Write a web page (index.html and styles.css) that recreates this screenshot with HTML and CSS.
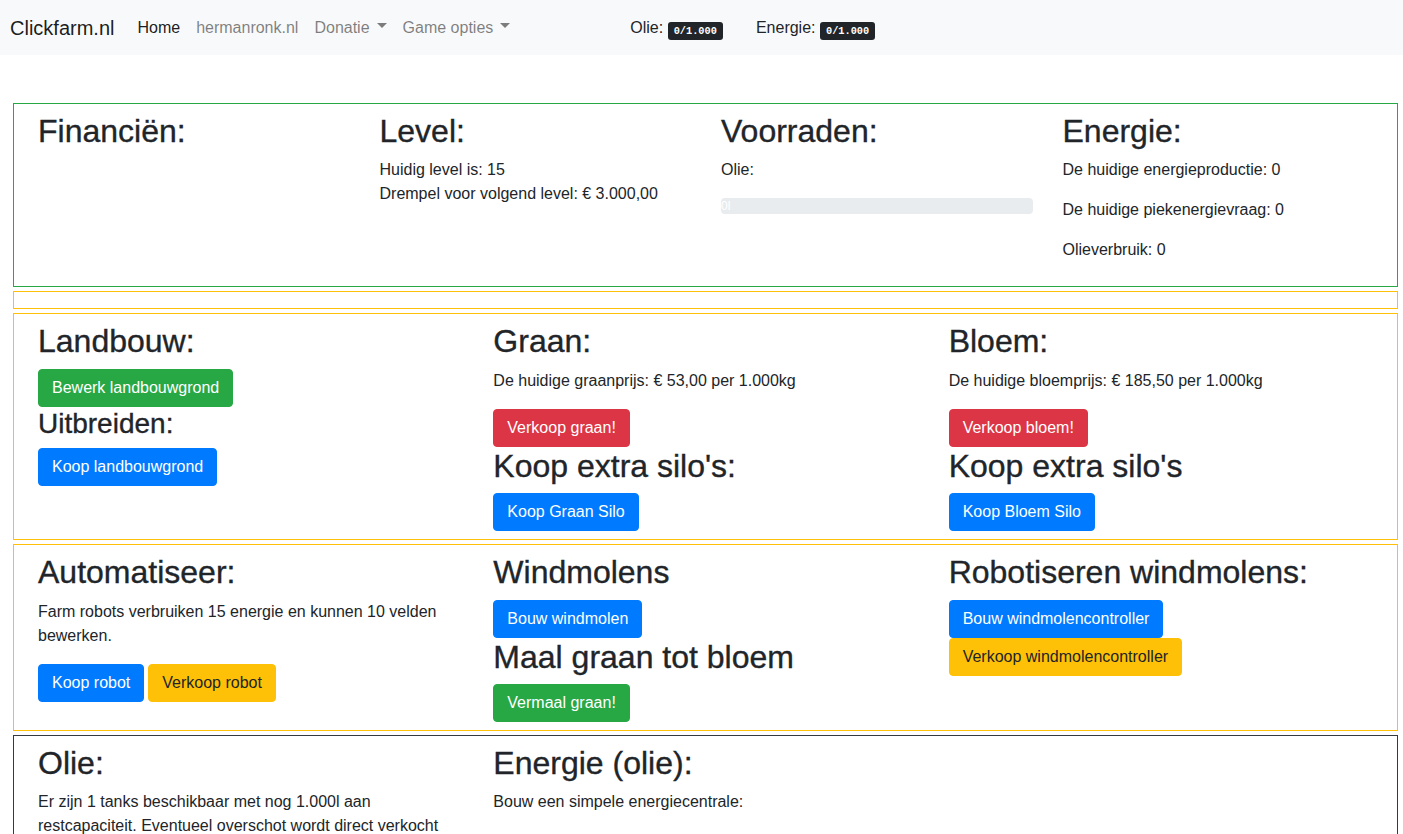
FILE: index.html
```html
<!DOCTYPE html>
<html lang="nl">
<head>
<meta charset="utf-8">
<title>Clickfarm.nl</title>
<link rel="stylesheet" href="styles.css">
</head>
<body>
<nav class="navbar">
  <a class="brand" href="#">Clickfarm.nl</a>
  <ul class="nav">
    <li><a class="nav-link active" href="#">Home</a></li>
    <li><a class="nav-link" href="#">hermanronk.nl</a></li>
    <li><a class="nav-link dropdown" href="#">Donatie</a></li>
    <li><a class="nav-link dropdown" href="#">Game opties</a></li>
  </ul>
  <div class="stats">
    <span class="stat">Olie: <kbd>0/1.000</kbd></span>
    <span class="stat">Energie: <kbd>0/1.000</kbd></span>
  </div>
</nav>

<main class="content">
  <section class="card card-success">
    <div class="row row-4">
      <div class="col">
        <h2>Financiën:</h2>
      </div>
      <div class="col">
        <h2>Level:</h2>
        <p class="lines"><span>Huidig level is: 15</span><span>Drempel voor volgend level: € 3.000,00</span></p>
      </div>
      <div class="col">
        <h2>Voorraden:</h2>
        <p>Olie:</p>
        <div class="progress"><div class="progress-bar" style="width: 0%">0l</div></div>
      </div>
      <div class="col">
        <h2>Energie:</h2>
        <p>De huidige energieproductie: 0</p>
        <p>De huidige piekenergievraag: 0</p>
        <p>Olieverbruik: 0</p>
      </div>
    </div>
  </section>

  <section class="card card-warning card-empty"></section>

  <section class="card card-warning">
    <div class="row row-3">
      <div class="col">
        <h2>Landbouw:</h2>
        <button class="btn btn-success">Bewerk landbouwgrond</button>
        <h3>Uitbreiden:</h3>
        <button class="btn btn-primary">Koop landbouwgrond</button>
      </div>
      <div class="col">
        <h2>Graan:</h2>
        <p>De huidige graanprijs: € 53,00 per 1.000kg</p>
        <button class="btn btn-danger">Verkoop graan!</button>
        <h2>Koop extra silo's:</h2>
        <button class="btn btn-primary">Koop Graan Silo</button>
      </div>
      <div class="col">
        <h2>Bloem:</h2>
        <p>De huidige bloemprijs: € 185,50 per 1.000kg</p>
        <button class="btn btn-danger">Verkoop bloem!</button>
        <h2>Koop extra silo's</h2>
        <button class="btn btn-primary">Koop Bloem Silo</button>
      </div>
    </div>
  </section>

  <section class="card card-warning">
    <div class="row row-3">
      <div class="col">
        <h2>Automatiseer:</h2>
        <p>Farm robots verbruiken 15 energie en kunnen 10 velden bewerken.</p>
        <div class="btn-row">
          <button class="btn btn-primary">Koop robot</button>
          <button class="btn btn-warning">Verkoop robot</button>
        </div>
      </div>
      <div class="col">
        <h2>Windmolens</h2>
        <button class="btn btn-primary">Bouw windmolen</button>
        <h2>Maal graan tot bloem</h2>
        <button class="btn btn-success">Vermaal graan!</button>
      </div>
      <div class="col">
        <h2>Robotiseren windmolens:</h2>
        <button class="btn btn-primary">Bouw windmolencontroller</button>
        <button class="btn btn-warning">Verkoop windmolencontroller</button>
      </div>
    </div>
  </section>

  <section class="card card-dark">
    <div class="row row-3">
      <div class="col">
        <h2>Olie:</h2>
        <p>Er zijn 1 tanks beschikbaar met nog 1.000l aan restcapaciteit. Eventueel overschot wordt direct verkocht tegen de huidige olieprijs.</p>
      </div>
      <div class="col">
        <h2>Energie (olie):</h2>
        <p>Bouw een simpele energiecentrale:</p>
      </div>
      <div class="col"></div>
    </div>
  </section>
</main>
</body>
</html>
```

FILE: styles.css
```css
* {
  box-sizing: border-box;
}

html, body {
  margin: 0;
  padding: 0;
}

body {
  font-family: "Liberation Sans", Arial, sans-serif;
  font-size: 16px;
  line-height: 1.5;
  color: #212529;
  background: #fff;
  overflow: hidden;
}

/* Navbar */
.navbar {
  display: flex;
  align-items: center;
  height: 55px;
  padding: 0 10px;
  background: #f8f9fa;
}

.brand {
  font-size: 20px;
  line-height: 30px;
  padding: 5px 0;
  margin-right: 15px;
  color: rgba(0, 0, 0, 0.9);
  text-decoration: none;
}

.nav {
  display: flex;
  list-style: none;
  margin: 0;
  padding: 0;
}

.nav-link {
  display: block;
  padding: 8px 8px;
  color: rgba(0, 0, 0, 0.5);
  text-decoration: none;
}

.nav-link.active {
  color: rgba(0, 0, 0, 0.9);
}

.nav-link.dropdown::after {
  content: "";
  display: inline-block;
  margin-left: 7px;
  vertical-align: 0.255em;
  border-top: 5px solid;
  border-right: 5px solid transparent;
  border-left: 5px solid transparent;
  border-bottom: 0;
}

.stats {
  display: flex;
  margin-left: 112px;
  gap: 33px;
}

.stat {
  white-space: nowrap;
}

kbd {
  display: inline-block;
  font-family: "Liberation Mono", "DejaVu Sans Mono", monospace;
  font-size: 10.3px;
  font-weight: 700;
  line-height: 12px;
  padding: 3px 6px;
  color: #fff;
  background: #212529;
  border-radius: 3px;
  vertical-align: -1px;
}

/* Content */
.content {
  padding: 48px 5px 0 13px;
}

.card {
  border: 1px solid;
  padding: 8px 8px 8px 9px;
  margin-bottom: 4px;
  background: #fff;
}

.card-success { border-color: #28a745; }
.card-warning { border-color: #ffc107; }
.card-dark { border-color: #343a40; }

.card-empty {
  height: 18px;
}

.row {
  display: grid;
}

.row-4 { grid-template-columns: repeat(4, 1fr); }
.row-3 { grid-template-columns: repeat(3, 1fr); }

.col {
  padding: 0 15px;
  display: flex;
  flex-direction: column;
  align-items: flex-start;
  min-width: 0;
}

h2, h3 {
  font-weight: 500;
  line-height: 1.2;
  margin: 0 0 8px;
  -webkit-text-stroke: 0.35px currentColor;
}

h2 { font-size: 32px; }
h3 { font-size: 28px; }

p {
  margin: 0 0 16px;
}

.lines span {
  display: block;
}

.progress {
  width: 100%;
  height: 16px;
  background: #e9ecef;
  border-radius: 4px;
  overflow: hidden;
  font-size: 12px;
  line-height: 16px;
}

.progress-bar {
  height: 100%;
  color: #fff;
  white-space: nowrap;
  background: #007bff;
}

.btn {
  display: inline-block;
  font-family: inherit;
  font-size: 16px;
  line-height: 24px;
  padding: 6px 13px;
  border: 1px solid transparent;
  border-radius: 4px;
  cursor: pointer;
  white-space: nowrap;
}

.btn-primary { background: #007bff; border-color: #007bff; color: #fff; }
.btn-success { background: #28a745; border-color: #28a745; color: #fff; }
.btn-danger { background: #dc3545; border-color: #dc3545; color: #fff; }
.btn-warning { background: #ffc107; border-color: #ffc107; color: #212529; }

.btn-row {
  display: flex;
  gap: 4px;
}
```
